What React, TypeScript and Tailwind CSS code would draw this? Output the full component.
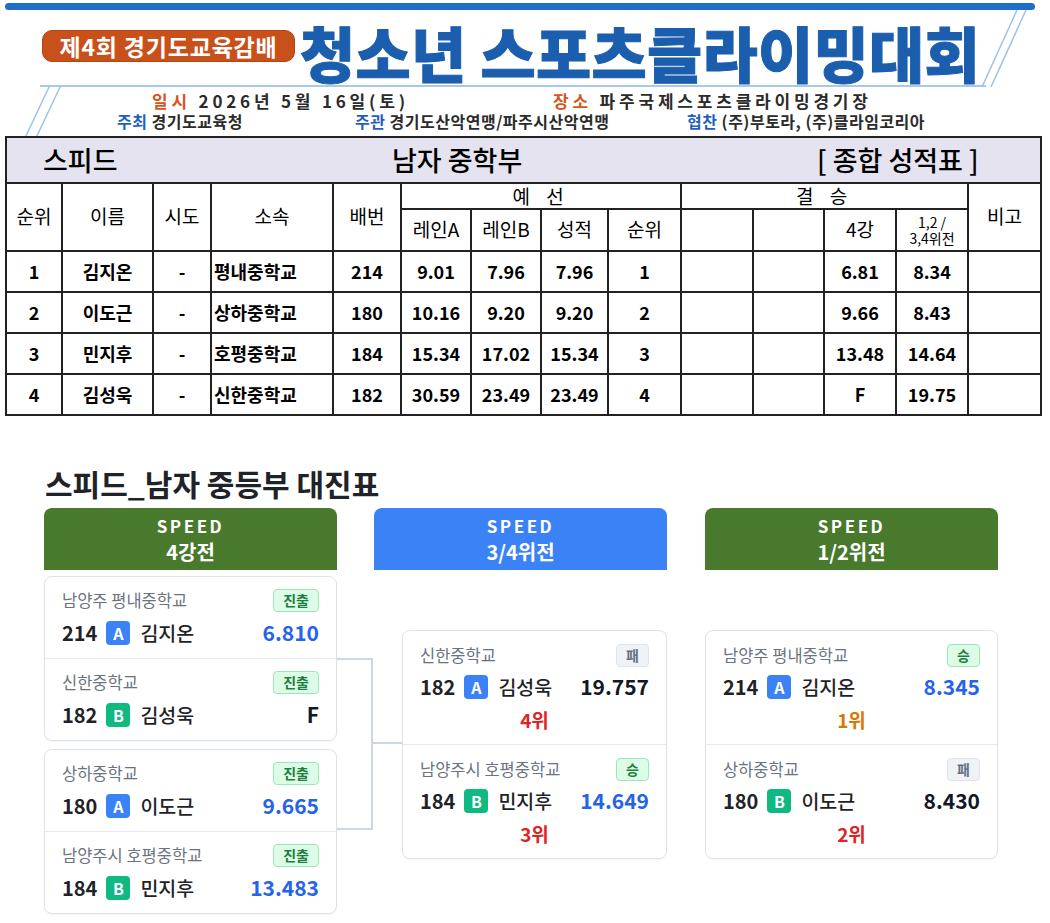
import React from "react";

type Entry = {
  school: string;
  badge: "진출" | "승" | "패";
  bib: string;
  lane: "A" | "B";
  name: string;
  score: string;
  scoreBlue: boolean;
  rank?: string;
  rankColor?: string;
};

function StatusBadge({ kind }: { kind: "진출" | "승" | "패" }) {
  if (kind === "패") {
    return (
      <span className="flex h-[23px] items-center rounded-[4px] border border-[#dfe4ec] bg-[#eff2f7] px-[9px] text-[14px] font-bold text-[#667085]">
        패
      </span>
    );
  }
  return (
    <span className="flex h-[23px] items-center rounded-[4px] border border-[#9ee6b4] bg-[#dcfce7] px-[9px] text-[14px] font-bold text-[#1d7f3d]">
      {kind}
    </span>
  );
}

function LaneBadge({ lane }: { lane: "A" | "B" }) {
  return lane === "A" ? (
    <span className="flex h-[24px] w-[24px] items-center justify-center rounded-[4px] bg-[#3b82f6] text-[16px] font-bold text-white">
      A
    </span>
  ) : (
    <span className="flex h-[24px] w-[24px] items-center justify-center rounded-[4px] bg-[#10b981] text-[16px] font-bold text-white">
      B
    </span>
  );
}

function EntryRow({ e, last }: { e: Entry; last?: boolean }) {
  return (
    <div
      className={
        last
          ? "px-[17px] pt-[12px] pb-[12px]"
          : "border-b border-[#e5e9f0] px-[17px] pt-[12px] pb-[12px]"
      }
    >
      <div className="flex h-[24px] items-center justify-between">
        <span className="text-[16.5px] text-[#6b7280]">{e.school}</span>
        <StatusBadge kind={e.badge} />
      </div>
      <div className="mt-[7px] flex h-[26px] items-center justify-between">
        <div className="flex items-center">
          <span className="text-[20px] font-bold text-[#1f2328]">{e.bib}</span>
          <span className="ml-[9px]">
            <LaneBadge lane={e.lane} />
          </span>
          <span className="ml-[10px] text-[19.5px] font-medium text-[#1f2328]">{e.name}</span>
        </div>
        <span
          className={
            e.scoreBlue
              ? "text-[21px] font-bold text-[#2563eb]"
              : "text-[21px] font-bold text-[#111827]"
          }
        >
          {e.score}
        </span>
      </div>
      {e.rank ? (
        <div
          className={
            e.rankColor === "orange"
              ? "mt-[9px] mb-[1px] text-center text-[19px] font-bold leading-[22px] text-[#d97706]"
              : "mt-[9px] mb-[1px] text-center text-[19px] font-bold leading-[22px] text-[#dc2626]"
          }
        >
          {e.rank}
        </div>
      ) : null}
    </div>
  );
}

function Card({ entries }: { entries: Entry[] }) {
  return (
    <div className="rounded-[8px] border border-[#dde3ec] bg-white shadow-[0_1px_2px_rgba(0,0,0,0.04)]">
      {entries.map((e, i) => (
        <EntryRow key={i} e={e} last={i === entries.length - 1} />
      ))}
    </div>
  );
}

function ColHeader({ title, blue }: { title: string; blue?: boolean }) {
  return (
    <div
      className={
        blue
          ? "flex h-[62px] flex-col items-center justify-center rounded-t-[8px] bg-[#3b82f6] text-white"
          : "flex h-[62px] flex-col items-center justify-center rounded-t-[8px] bg-[#48792d] text-white"
      }
    >
      <div className="text-[17px] font-bold leading-[26px] tracking-[2.5px]">SPEED</div>
      <div className="text-[20px] font-bold leading-[26px]">{title}</div>
    </div>
  );
}

const rows = [
  ["1", "김지온", "-", "평내중학교", "214", "9.01", "7.96", "7.96", "1", "", "", "6.81", "8.34", ""],
  ["2", "이도근", "-", "상하중학교", "180", "10.16", "9.20", "9.20", "2", "", "", "9.66", "8.43", ""],
  ["3", "민지후", "-", "호평중학교", "184", "15.34", "17.02", "15.34", "3", "", "", "13.48", "14.64", ""],
  ["4", "김성욱", "-", "신한중학교", "182", "30.59", "23.49", "23.49", "4", "", "", "F", "19.75", ""],
];

export default function App() {
  const c1a: Entry[] = [
    { school: "남양주 평내중학교", badge: "진출", bib: "214", lane: "A", name: "김지온", score: "6.810", scoreBlue: true },
    { school: "신한중학교", badge: "진출", bib: "182", lane: "B", name: "김성욱", score: "F", scoreBlue: false },
  ];
  const c1b: Entry[] = [
    { school: "상하중학교", badge: "진출", bib: "180", lane: "A", name: "이도근", score: "9.665", scoreBlue: true },
    { school: "남양주시 호평중학교", badge: "진출", bib: "184", lane: "B", name: "민지후", score: "13.483", scoreBlue: true },
  ];
  const c2: Entry[] = [
    { school: "신한중학교", badge: "패", bib: "182", lane: "A", name: "김성욱", score: "19.757", scoreBlue: false, rank: "4위", rankColor: "red" },
    { school: "남양주시 호평중학교", badge: "승", bib: "184", lane: "B", name: "민지후", score: "14.649", scoreBlue: true, rank: "3위", rankColor: "red" },
  ];
  const c3: Entry[] = [
    { school: "남양주 평내중학교", badge: "승", bib: "214", lane: "A", name: "김지온", score: "8.345", scoreBlue: true, rank: "1위", rankColor: "orange" },
    { school: "상하중학교", badge: "패", bib: "180", lane: "B", name: "이도근", score: "8.430", scoreBlue: false, rank: "2위", rankColor: "red" },
  ];

  return (
    <div className="relative h-[923px] w-[1050px] overflow-hidden bg-white font-['Noto_Sans_CJK_KR','Noto_Sans',sans-serif] text-[#1a1a1a]">
      {/* decorative diagonal lines */}
      <svg className="absolute left-0 top-0" width="1050" height="140">
        <line x1="1017" y1="10" x2="982" y2="87" stroke="#9dc2ea" strokeWidth="1.5" />
        <line x1="1026" y1="10" x2="991" y2="87" stroke="#9dc2ea" strokeWidth="1.5" />
        <line x1="50" y1="85" x2="24" y2="140" stroke="#9dc2ea" strokeWidth="1.5" />
        <line x1="61" y1="85" x2="35" y2="140" stroke="#9dc2ea" strokeWidth="1.5" />
      </svg>

      {/* top bar */}
      <div className="pl-[5px] pt-[3px]">
        <div className="h-[7px] w-[1030px] rounded-full bg-[#1f6fc8]" />
      </div>

      {/* title */}
      <div className="flex items-start pl-[42px]">
        <div className="mt-[20px] h-[32px] w-[253px] rounded-[10px] border border-[#b5440f] bg-[#c8501a] text-center text-[23px] font-bold leading-[30px] tracking-[0.8px] text-white">
          제4회 경기도교육감배
        </div>
        <div className="ml-[5px] mt-[12px] text-[60px] font-black leading-[60px] tracking-[0.3px] text-[#1b5eae] [-webkit-text-stroke:1px_#1b5eae]">
          청소년 스포츠클라이밍대회
        </div>
      </div>
      <div className="ml-[40px] mt-[3px] h-[1.5px] w-[946px] bg-[#a9c9ec]" />

      {/* info lines */}
      <div className="mt-[4px] flex h-[20px] items-center pl-[152px] text-[17px] font-bold leading-[20px] tracking-[3.8px]">
        <div className="w-[401px]">
          <span className="text-[#d8541c]">일시</span> <span className="text-[#2b2b2b]">2026년 5월 16일(토)</span>
        </div>
        <div>
          <span className="text-[#d8541c]">장소</span> <span className="text-[#2b2b2b]">파주국제스포츠클라이밍경기장</span>
        </div>
      </div>
      <div className="flex h-[21px] items-center pl-[117px] text-[16px] font-bold leading-[20px] tracking-[0.5px]">
        <div className="w-[238px]">
          <span className="text-[#1f5fbf]">주최</span> <span className="text-[#2b2b2b]">경기도교육청</span>
        </div>
        <div className="w-[332px]">
          <span className="text-[#1f5fbf]">주관</span> <span className="text-[#2b2b2b]">경기도산악연맹/파주시산악연맹</span>
        </div>
        <div>
          <span className="text-[#1f5fbf]">협찬</span> <span className="text-[#2b2b2b]">(주)부토라, (주)클라임코리아</span>
        </div>
      </div>

      {/* results table */}
      <div className="relative ml-[5px] mt-[4px] w-[1035px] bg-white">
        <table className="w-[1035px] table-fixed border-collapse text-[19px] text-black">
          <colgroup>
            <col className="w-[56px]" />
            <col className="w-[91px]" />
            <col className="w-[58px]" />
            <col className="w-[122px]" />
            <col className="w-[68px]" />
            <col className="w-[70px]" />
            <col className="w-[70px]" />
            <col className="w-[67px]" />
            <col className="w-[73px]" />
            <col className="w-[72px]" />
            <col className="w-[71px]" />
            <col className="w-[72px]" />
            <col className="w-[72px]" />
            <col className="w-[73px]" />
          </colgroup>
          <tbody>
            <tr className="h-[46px]">
              <td colSpan={14} className="border-2 border-[#222] bg-[#e5e3ef] p-0">
                <div className="flex items-center text-[27px] font-medium leading-[30px]">
                  <span className="w-[385px] pl-[36px]">스피드</span>
                  <span className="w-[425px]">남자 중학부</span>
                  <span>[ 종합 성적표 ]</span>
                </div>
              </td>
            </tr>
            <tr className="h-[26px]">
              <td rowSpan={2} className="border-2 border-[#222] p-0 text-center">순위</td>
              <td rowSpan={2} className="border-2 border-[#222] p-0 text-center">이름</td>
              <td rowSpan={2} className="border-2 border-[#222] p-0 text-center">시도</td>
              <td rowSpan={2} className="border-2 border-[#222] p-0 text-center">소속</td>
              <td rowSpan={2} className="border-2 border-[#222] p-0 text-center">배번</td>
              <td colSpan={4} className="border-2 border-[#222] p-0 text-center leading-[22px] tracking-[6px]">예 선</td>
              <td colSpan={4} className="border-2 border-[#222] p-0 text-center leading-[22px] tracking-[6px]">결 승</td>
              <td rowSpan={2} className="border-2 border-[#222] p-0 text-center">비고</td>
            </tr>
            <tr className="h-[42px]">
              <td className="border-2 border-[#222] p-0 text-center">레인A</td>
              <td className="border-2 border-[#222] p-0 text-center">레인B</td>
              <td className="border-2 border-[#222] p-0 text-center">성적</td>
              <td className="border-2 border-[#222] p-0 text-center">순위</td>
              <td className="border-2 border-[#222] p-0" />
              <td className="border-2 border-[#222] p-0" />
              <td className="border-2 border-[#222] p-0 text-center">4강</td>
              <td className="border-2 border-[#222] p-0 text-center text-[14px] leading-[16px]">
                1,2 /<br />3,4위전
              </td>
            </tr>
            {rows.map((r, i) => (
              <tr key={i} className="h-[41px]">
                {r.map((v, j) => (
                  <td
                    key={j}
                    className={
                      j === 3
                        ? "border-2 border-[#222] p-0 pl-[2px] text-left text-[18px] font-bold"
                        : "border-2 border-[#222] p-0 text-center text-[18px] font-bold"
                    }
                  >
                    {v}
                  </td>
                ))}
              </tr>
            ))}
          </tbody>
        </table>
      </div>

      {/* bracket */}
      <div className="ml-[45px] mt-[49px] text-[30px] font-bold leading-[36px] text-[#1f2328]">
        스피드_남자 중등부 대진표
      </div>
      <div className="ml-[44px] mt-[7px] w-[954px]">
        <div className="flex">
          <div className="w-[293px]">
            <ColHeader title="4강전" />
          </div>
          <div className="ml-[37px] w-[293px]">
            <ColHeader title="3/4위전" blue />
          </div>
          <div className="ml-[38px] w-[293px]">
            <ColHeader title="1/2위전" />
          </div>
        </div>
        <div className="relative mt-[6px] flex">
          {/* connectors */}
          <div className="absolute left-[293px] top-[82px] h-[2px] w-[36px] bg-[#cdd6e2]" />
          <div className="absolute left-[327px] top-[82px] h-[172px] w-[2px] bg-[#cdd6e2]" />
          <div className="absolute left-[293px] top-[252px] h-[2px] w-[36px] bg-[#cdd6e2]" />
          <div className="absolute left-[327px] top-[166px] h-[2px] w-[31px] bg-[#cdd6e2]" />

          <div className="relative w-[293px]">
            <Card entries={c1a} />
            <div className="mt-[8px]">
              <Card entries={c1b} />
            </div>
          </div>
          <div className="relative ml-[37px] flex w-[293px] items-center pl-[28px]">
            <div className="w-full">
              <Card entries={c2} />
            </div>
          </div>
          <div className="relative ml-[38px] flex w-[293px] items-center">
            <div className="w-full">
              <Card entries={c3} />
            </div>
          </div>
        </div>
      </div>
    </div>
  );
}
